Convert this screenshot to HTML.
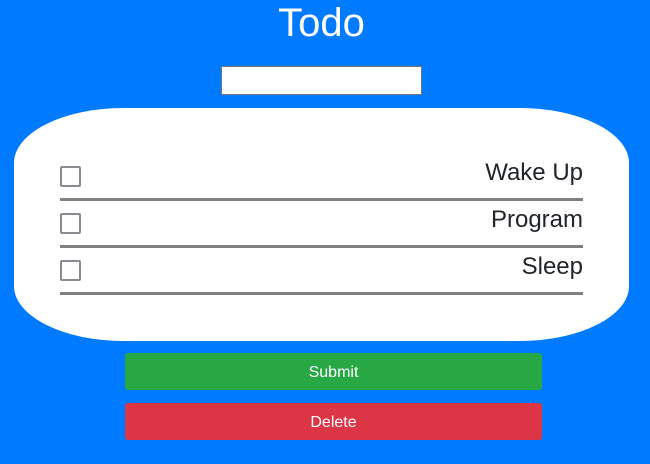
<!DOCTYPE html>
<html><head><style>
body{margin:0;width:650px;height:464px;background:#007bff;font-family:"Liberation Sans",sans-serif;position:relative;overflow:hidden}
h1{position:absolute;top:0;left:0;width:643px;text-align:center;margin:0;font-weight:normal;color:#fff;font-size:40px;line-height:46px}
.inp{position:absolute;left:221px;top:66px;width:199px;height:27px;background:#fff;border:1px solid #767676}
.card{position:absolute;left:14px;top:108px;width:615px;height:233px;background:#fff;border-radius:110px/55px}
.row{position:absolute;left:60px;width:523px;height:44px;border-bottom:3px solid #808080}
.cb{position:absolute;left:0;bottom:11px;width:17px;height:17px;border:2px solid #8a8a90;border-radius:2px}
.t{position:absolute;right:0;top:5px;font-size:24px;color:#212529}
.btn{position:absolute;left:125px;width:417px;height:37px;border-radius:3px;color:#fff;font-size:16px;text-align:center;line-height:40px}
</style></head><body>
<h1>Todo</h1>
<div class="inp"></div>
<div class="card"></div>
<div class="row" style="top:154px"><div class="cb"></div><div class="t">Wake Up</div></div>
<div class="row" style="top:201px"><div class="cb"></div><div class="t">Program</div></div>
<div class="row" style="top:248px"><div class="cb"></div><div class="t">Sleep</div></div>
<div class="btn" style="top:353px;background:#28a745">Submit</div>
<div class="btn" style="top:403px;background:#dc3545">Delete</div>
</body></html>
